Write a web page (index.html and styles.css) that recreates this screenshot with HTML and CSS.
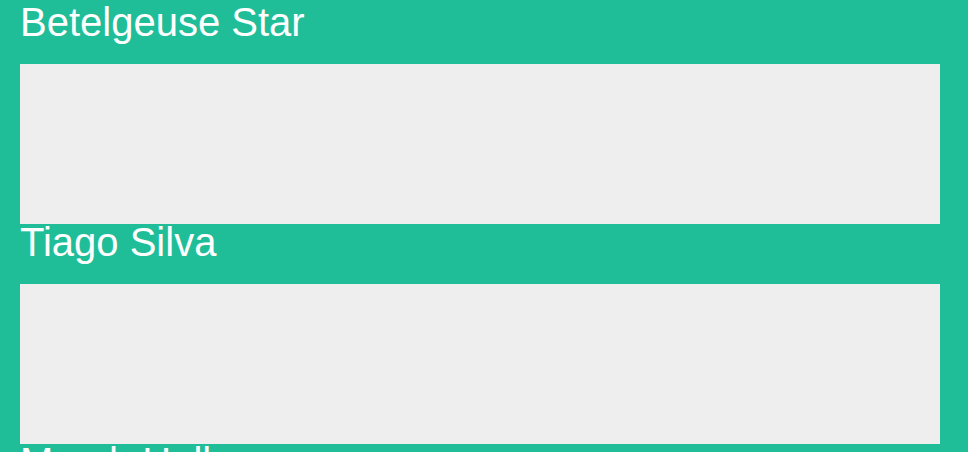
FILE: index.html
```html
<!DOCTYPE html>
<html lang="en">
<head>
<meta charset="utf-8">
<title>Cards</title>
<link rel="stylesheet" href="styles.css">
</head>
<body>
  <main class="list">
    <section class="item">
      <h1 class="item-title">Betelgeuse Star</h1>
      <div class="item-box"></div>
    </section>
    <section class="item">
      <h1 class="item-title">Tiago Silva</h1>
      <div class="item-box"></div>
    </section>
    <section class="item">
      <h1 class="item-title">Marsh Hollow</h1>
      <div class="item-box"></div>
    </section>
  </main>
</body>
</html>
```

FILE: styles.css
```css
html, body {
  margin: 0;
  padding: 0;
  background: #1fbe99;
}

body {
  font-family: "Liberation Sans", Arial, Helvetica, sans-serif;
  color: #ffffff;
}

.list {
  display: flex;
  flex-direction: column;
  width: 920px;
  padding: 4px 0 0 20px;
}

.item {
  display: flex;
  flex-direction: column;
}

.item-title {
  margin: 0 0 24px;
  font-size: 40px;
  line-height: 36px;
  font-weight: normal;
  color: #ffffff;
}

.item-box {
  height: 160px;
  background: #eeeeee;
}
```
